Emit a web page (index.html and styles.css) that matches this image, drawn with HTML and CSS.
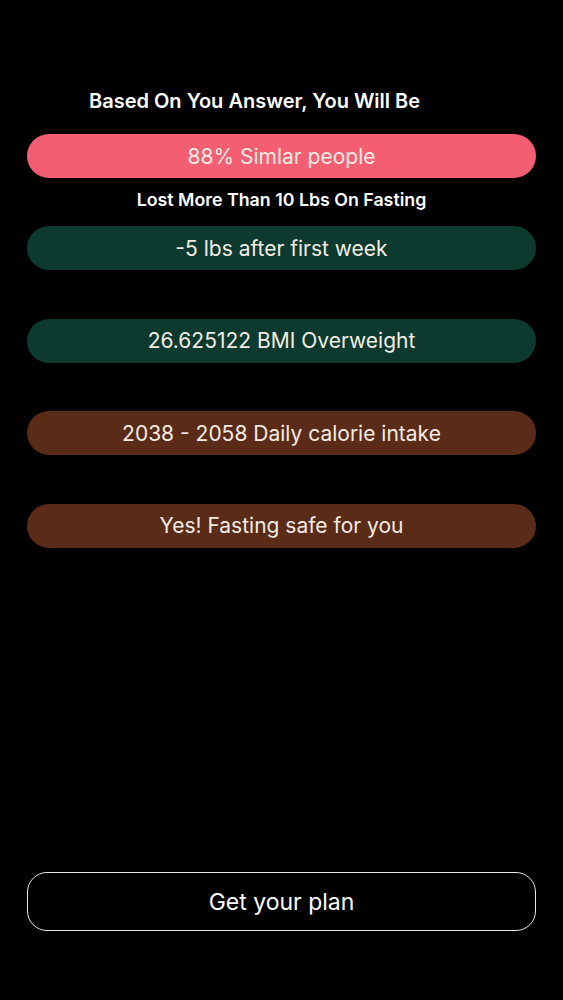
FILE: index.html
```html
<!DOCTYPE html>
<html lang="en">
<head>
    <meta charset="UTF-8">
    <meta name="viewport" content="width=device-width, initial-scale=1.0">
    <title>Your Result</title>
    <link rel="stylesheet" href="styles.css">
</head>
<body>
    <div class="container">
        <h2 class="title">Based On You Answer, You Will Be</h2>
        <div class="pill pink">88% Simlar people</div>
        <p class="subtitle">Lost More Than 10 Lbs On Fasting</p>
        <div class="results">
            <div class="pill green">-5 lbs after first week</div>
            <div class="pill green">26.625122 BMI Overweight</div>
            <div class="pill brown">2038 - 2058 Daily calorie intake</div>
            <div class="pill brown">Yes! Fasting safe for you</div>
        </div>
        <button class="plan-button" type="button">Get your plan</button>
    </div>
</body>
</html>
```

FILE: styles.css
```css
body {
    font-family: Inter, "Noto Sans", sans-serif;
    background-color: #000;
    color: #fff;
    margin: 0;
    padding: 0;
}

.container {
    display: flex;
    flex-direction: column;
    height: 100vh;
    box-sizing: border-box;
    padding: 89px 27px 69px 27px;
}

.title {
    margin: 0 0 21px 0;
    padding-left: 62px;
    font-size: 20px;
    font-weight: 600;
    line-height: 24px;
}

.pill {
    height: 44px;
    border-radius: 22px;
    display: flex;
    justify-content: center;
    align-items: center;
    font-size: 21px;
    color: #f3ece4;
}

.pink {
    background-color: #f35e73;
}

.green {
    background-color: #0d3a2e;
}

.brown {
    background-color: #5a2b17;
}

.subtitle {
    margin: 11px 0 15px 0;
    text-align: center;
    font-size: 17.8px;
    font-weight: 600;
    line-height: 22px;
}

.results {
    display: flex;
    flex-direction: column;
    gap: 48.5px;
}

.plan-button {
    margin-top: auto;
    height: 59px;
    background-color: #000;
    border: 1.5px solid #e6e6e6;
    border-radius: 20px;
    color: #fff;
    font-family: Inter, "Noto Sans", sans-serif;
    font-size: 23px;
    cursor: pointer;
}
```
